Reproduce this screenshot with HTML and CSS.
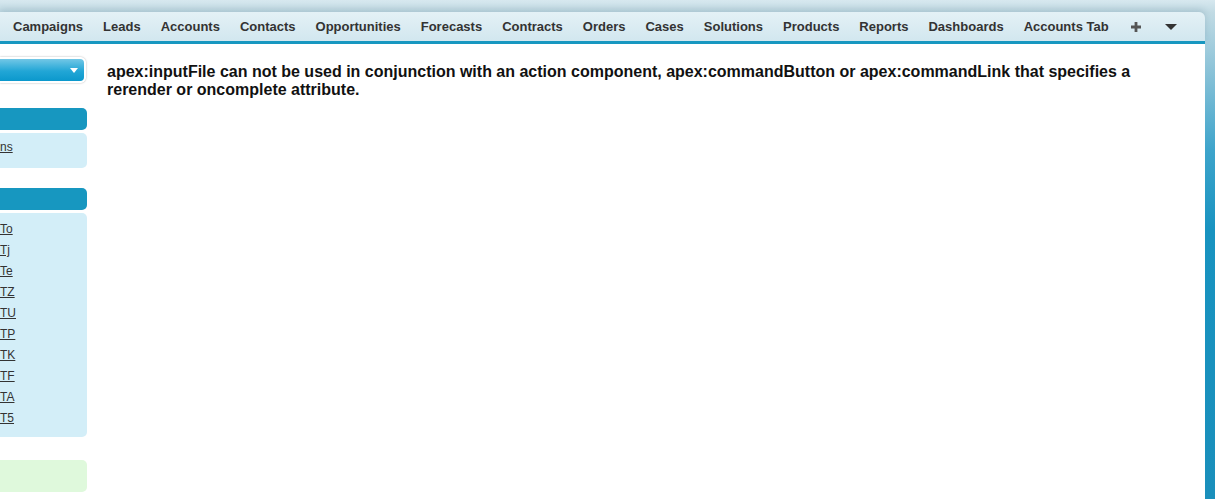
FILE: index.html
```html
<!DOCTYPE html>
<html>
<head>
<meta charset="utf-8">
<link rel="stylesheet" href="styles.css">
</head>
<body>
<div class="page">
  <nav class="tabbar">
    <a class="tab">Campaigns</a>
    <a class="tab">Leads</a>
    <a class="tab">Accounts</a>
    <a class="tab">Contacts</a>
    <a class="tab">Opportunities</a>
    <a class="tab">Forecasts</a>
    <a class="tab">Contracts</a>
    <a class="tab">Orders</a>
    <a class="tab">Cases</a>
    <a class="tab">Solutions</a>
    <a class="tab">Products</a>
    <a class="tab">Reports</a>
    <a class="tab">Dashboards</a>
    <a class="tab">Accounts Tab</a>
    <a class="tab tab-icon"><svg width="10" height="10" viewBox="0 0 10 10"><path d="M3.6 0h2.8v3.6H10v2.8H6.4V10H3.6V6.4H0V3.6h3.6z" fill="#555"/></svg></a>
    <a class="tab tab-icon"><svg width="12" height="6" viewBox="0 0 12 6"><path d="M0 0h12L6 6z" fill="#333"/></svg></a>
  </nav>
  <div class="content">
    <aside class="sidebar">
      <div class="picker"><span class="picker-arrow"></span></div>
      <div class="module">
        <div class="module-head"></div>
        <div class="module-body short">
          <a class="side-link">ns</a>
        </div>
      </div>
      <div class="module">
        <div class="module-head"></div>
        <div class="module-body">
          <a class="side-link">To</a>
          <a class="side-link">Tj</a>
          <a class="side-link">Te</a>
          <a class="side-link">TZ</a>
          <a class="side-link">TU</a>
          <a class="side-link">TP</a>
          <a class="side-link">TK</a>
          <a class="side-link">TF</a>
          <a class="side-link">TA</a>
          <a class="side-link">T5</a>
        </div>
      </div>
      <div class="green-box"></div>
    </aside>
    <main class="main">
      <p class="message">apex:inputFile can not be used in conjunction with an action component, apex:commandButton or apex:commandLink that specifies a rerender or oncomplete attribute.</p>
    </main>
  </div>
</div>
</body>
</html>
```
FILE: styles.css
```css
html, body {
  margin: 0;
  padding: 0;
  height: 100%;
}
body {
  background: linear-gradient(to bottom, #d7e8ef 0px, #c2dbe4 12px, #8cc3d8 70px, #3ea4cb 150px, #1893c0 230px, #1a8fbb 499px);
  font-family: Arial, "Liberation Sans", sans-serif;
  overflow: hidden;
}
.page {
  width: 1205px;
  padding-top: 12px;
}
.tabbar {
  display: flex;
  align-items: center;
  height: 29px;
  padding-left: 3px;
  background: linear-gradient(to bottom, #e4f1f6 0%, #d2e7ef 100%);
  border-bottom: 3px solid #1797c0;
  border-top-right-radius: 6px;
  box-shadow: 0 -3px 6px rgba(60, 100, 120, 0.18);
}
.tab {
  font-size: 13px;
  font-weight: bold;
  color: #333;
  padding: 0 10px;
  line-height: 29px;
  white-space: nowrap;
}
.tab-icon {
  display: flex;
  align-items: center;
  height: 29px;
  padding: 0 12px;
}
.tab-icon:first-of-type {
  padding-left: 14px;
}
.content {
  display: flex;
  background: #fff;
  height: 455px;
}
.sidebar {
  width: 87px;
  flex: none;
  padding-top: 13px;
  display: flex;
  flex-direction: column;
}
.picker {
  height: 22px;
  margin-bottom: 25px;
  border: 2px solid #fff;
  border-left: none;
  border-radius: 0 6px 6px 0;
  background: linear-gradient(to bottom, #72c7e6 0%, #22a6d6 55%, #0b98cc 100%);
  box-shadow: 0 0 2px rgba(0, 0, 0, 0.35);
  display: flex;
  align-items: center;
  justify-content: flex-end;
  padding-right: 6px;
  box-sizing: content-box;
  width: 78px;
}
.picker-arrow {
  width: 0;
  height: 0;
  border-left: 4px solid transparent;
  border-right: 4px solid transparent;
  border-top: 5px solid #fff;
}
.module {
  margin-bottom: 20px;
}
.module-head {
  height: 22px;
  background: #1797c0;
  border-radius: 0 5px 5px 0;
  margin-bottom: 3px;
}
.module-body {
  background: #d3eef8;
  border-radius: 0 5px 5px 0;
  padding: 6px 0 8px;
  display: flex;
  flex-direction: column;
}
.module-body.short {
  padding: 5px 0 12px;
}
.side-link {
  font-size: 12px;
  line-height: 21px;
  color: #333;
  text-decoration: underline;
}
.module-body.short .side-link {
  line-height: 18px;
}
.green-box {
  height: 32px;
  background: #dff9dc;
  border-radius: 0 5px 5px 0;
  margin-top: 3px;
}
.main {
  flex: 1;
  padding: 19px 40px 0 20px;
}
.message {
  margin: 0;
  font-size: 16px;
  line-height: 18px;
  font-weight: bold;
  color: #111;
  max-width: 1040px;
}
```
